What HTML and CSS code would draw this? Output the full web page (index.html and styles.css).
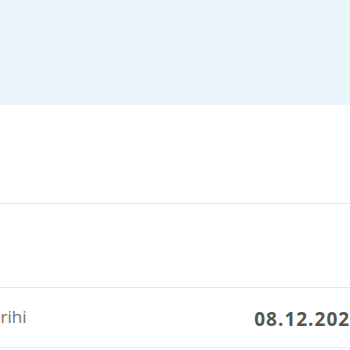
FILE: index.html
```html
<!DOCTYPE html>
<html lang="tr">
<head>
<meta charset="utf-8">
<link rel="stylesheet" href="styles.css">
</head>
<body>
<div class="page">
  <div class="hero"></div>
  <div class="block block-a"></div>
  <div class="block block-b"></div>
  <div class="row">
    <span class="label">tarihi</span>
    <span class="value">08.12.2023</span>
  </div>
</div>
</body>
</html>
```
FILE: styles.css
```css
html, body {
  margin: 0;
  padding: 0;
  background: #ffffff;
}
.page {
  width: 350px;
  overflow: hidden;
}
.hero {
  height: 105px;
  background: #eaf5fb;
}
.block-a {
  height: 98px;
  border-bottom: 1px solid #e6e6e6;
}
.block-b {
  height: 83px;
  border-bottom: 1px solid #e6e6e6;
}
.row {
  height: 59px;
  border-bottom: 1px solid #f0f0f0;
  display: flex;
  align-items: center;
  justify-content: space-between;
  white-space: nowrap;
}
.label {
  margin-left: -15px;
  font-family: "Open Sans", sans-serif;
  font-size: 17px;
  color: #707070;
  padding-bottom: 3px;
}
.value {
  margin-right: -12px;
  font-family: "Open Sans", sans-serif;
  font-size: 19px;
  letter-spacing: 1px;
  font-weight: 700;
  color: #555555;
  padding-top: 2px;
}
```
